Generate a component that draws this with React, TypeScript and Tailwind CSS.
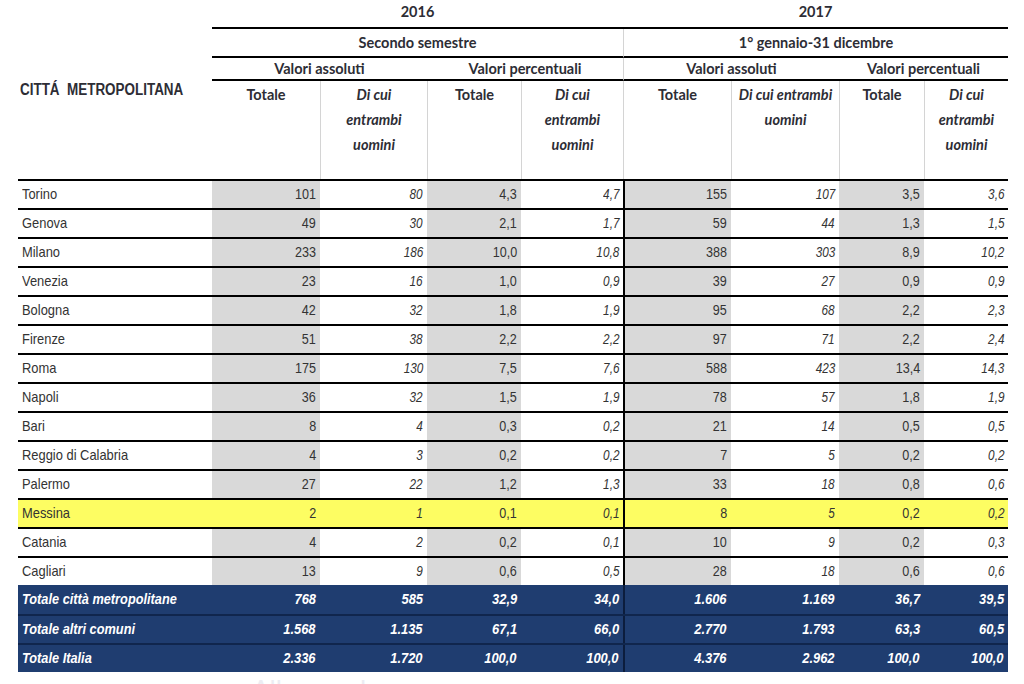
import React from "react";

type Row = { name: string; v: string[] };

const rows: Row[] = [
  { name: "Torino", v: ["101", "80", "4,3", "4,7", "155", "107", "3,5", "3,6"] },
  { name: "Genova", v: ["49", "30", "2,1", "1,7", "59", "44", "1,3", "1,5"] },
  { name: "Milano", v: ["233", "186", "10,0", "10,8", "388", "303", "8,9", "10,2"] },
  { name: "Venezia", v: ["23", "16", "1,0", "0,9", "39", "27", "0,9", "0,9"] },
  { name: "Bologna", v: ["42", "32", "1,8", "1,9", "95", "68", "2,2", "2,3"] },
  { name: "Firenze", v: ["51", "38", "2,2", "2,2", "97", "71", "2,2", "2,4"] },
  { name: "Roma", v: ["175", "130", "7,5", "7,6", "588", "423", "13,4", "14,3"] },
  { name: "Napoli", v: ["36", "32", "1,5", "1,9", "78", "57", "1,8", "1,9"] },
  { name: "Bari", v: ["8", "4", "0,3", "0,2", "21", "14", "0,5", "0,5"] },
  { name: "Reggio di Calabria", v: ["4", "3", "0,2", "0,2", "7", "5", "0,2", "0,2"] },
  { name: "Palermo", v: ["27", "22", "1,2", "1,3", "33", "18", "0,8", "0,6"] },
  { name: "Messina", v: ["2", "1", "0,1", "0,1", "8", "5", "0,2", "0,2"] },
  { name: "Catania", v: ["4", "2", "0,2", "0,1", "10", "9", "0,2", "0,3"] },
  { name: "Cagliari", v: ["13", "9", "0,6", "0,5", "28", "18", "0,6", "0,6"] },
];

const totals: Row[] = [
  { name: "Totale città metropolitane", v: ["768", "585", "32,9", "34,0", "1.606", "1.169", "36,7", "39,5"] },
  { name: "Totale altri comuni", v: ["1.568", "1.135", "67,1", "66,0", "2.770", "1.793", "63,3", "60,5"] },
  { name: "Totale Italia", v: ["2.336", "1.720", "100,0", "100,0", "4.376", "2.962", "100,0", "100,0"] },
];

const grid =
  "grid grid-cols-[194px_108px_107px_94px_102px_108px_108px_85px_84px]";
const narrow = "font-['Liberation_Sans_Narrow','Liberation_Sans',sans-serif]";
const head = "font-['Lato','Open_Sans',sans-serif]";

function DataRow({ r }: { r: Row }) {
  const yellow = r.name === "Messina";
  return (
    <div className={`${grid} h-[29px] border-t-2 border-black text-[#333] ${narrow} ${yellow ? "bg-[#fdfd62]" : ""}`}>
      <div className="flex items-center pl-[4px]">
        <span className="inline-block origin-left scale-x-[0.86] whitespace-nowrap text-[15px]">{r.name}</span>
      </div>
      {r.v.map((x, i) => {
        const gray = i % 2 === 0 && !yellow;
        const italic = i % 2 === 1;
        return (
          <div
            key={i}
            className={`flex items-center justify-end pr-[4px] ${gray ? "bg-[#d9d9d9]" : ""} ${i === 4 ? "border-l-2 border-black" : ""}`}
          >
            <span className={`inline-block origin-right ${italic ? "italic text-[14px] scale-x-[0.84]" : "text-[15px] scale-x-[0.84]"}`}>{x}</span>
          </div>
        );
      })}
    </div>
  );
}

function TotalRow({ r, first }: { r: Row; first: boolean }) {
  return (
    <div className={`${grid} h-[29px] bg-[#1f3d70] text-white font-bold italic ${narrow} ${first ? "" : "border-t-2 border-[#10264d]"}`}>
      <div className="flex items-center pl-[4px]">
        <span className="inline-block origin-left scale-x-[0.88] whitespace-nowrap text-[14.5px]">{r.name}</span>
      </div>
      {r.v.map((x, i) => (
        <div
          key={i}
          className={`flex items-center justify-end pr-[4px] ${i === 4 ? "border-l-2 border-[#0c1d3d]" : ""}`}
        >
          <span className="inline-block origin-right scale-x-[0.86] text-[15px]">{x}</span>
        </div>
      ))}
    </div>
  );
}

const sub = [
  ["Totale"],
  ["Di cui", "entrambi", "uomini"],
  ["Totale"],
  ["Di cui", "entrambi", "uomini"],
  ["Totale"],
  ["Di cui entrambi", "uomini"],
  ["Totale"],
  ["Di cui", "entrambi", "uomini"],
];

export default function App() {
  return (
    <div className="w-[1024px] h-[684px] overflow-hidden bg-white">
      <div className="ml-[18px] w-[990px]">
        {/* Header */}
        <div className={`${grid} ${head} text-[14.5px] font-bold text-[#2d2d35]`}>
          <div className="row-span-4 flex items-start pt-[78px] pl-[2px]">
            <span className={`${narrow} inline-block origin-left scale-x-[0.84] whitespace-nowrap text-[16px]`}>CITTÁ&nbsp; METROPOLITANA</span>
          </div>
          <div className="col-span-4 h-[29px] border-b-2 border-black flex items-center justify-center pb-[4px]">2016</div>
          <div className="col-span-4 h-[29px] border-b-2 border-black flex items-center justify-center pb-[4px]">2017</div>
          <div className="col-span-4 h-[29px] border-b-2 border-black flex items-center justify-center">Secondo semestre</div>
          <div className="col-span-4 h-[29px] border-b-2 border-black border-l border-l-[#d4d4d4] flex items-center justify-center">1° gennaio-31 dicembre</div>
          <div className="col-span-2 h-[23px] border-b-2 border-black flex items-center justify-center">Valori assoluti</div>
          <div className="col-span-2 h-[23px] border-b-2 border-black flex items-center justify-center">Valori percentuali</div>
          <div className="col-span-2 h-[23px] border-b-2 border-black border-l border-l-[#d4d4d4] flex items-center justify-center">Valori assoluti</div>
          <div className="col-span-2 h-[23px] border-b-2 border-black flex items-center justify-center">Valori percentuali</div>
          {sub.map((lines, i) => (
            <div
              key={i}
              className={`h-[98px] pt-[1px] text-center leading-[25px] whitespace-nowrap ${i > 0 ? "border-l border-[#d4d4d4]" : ""} ${lines.length > 1 ? "italic" : ""}`}
            >
              {lines.map((l, j) => (
                <div key={j}>{l}</div>
              ))}
            </div>
          ))}
        </div>
        {/* Body */}
        {rows.map((r) => (
          <DataRow key={r.name} r={r} />
        ))}
        {totals.map((r, i) => (
          <TotalRow key={r.name} r={r} first={i === 0} />
        ))}
      </div>
      <div className="ml-[252px] mt-[3px] text-[26px] leading-[30px] text-[#ececf2] font-['Lato',sans-serif]">Alla grande</div>
    </div>
  );
}
